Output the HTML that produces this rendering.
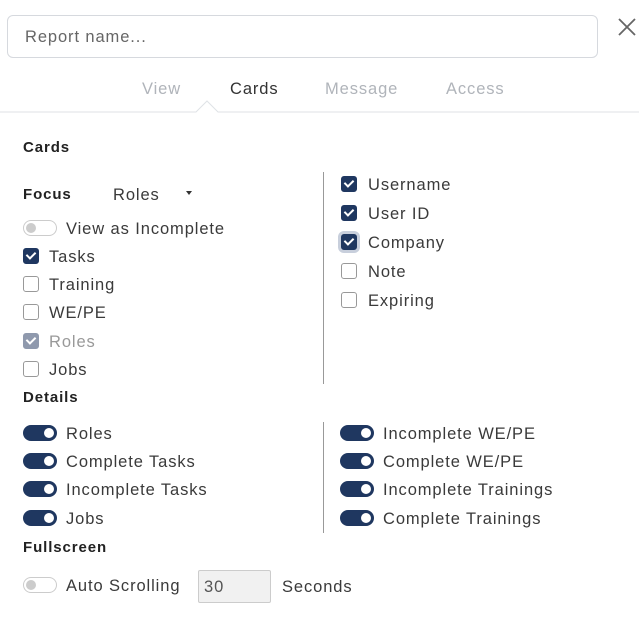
<!DOCTYPE html>
<html><head><style>
body{margin:0;width:639px;height:619px;background:#fff;font-family:"Liberation Sans",sans-serif;color:#333;position:relative;overflow:hidden}
.a{position:absolute;white-space:nowrap}
.t{font-size:16.5px;line-height:20px;color:#3a3a3a;letter-spacing:0.9px;margin-top:1px}
.b{font-weight:bold;font-size:15px;color:#222;letter-spacing:0.9px;margin-top:1px}
.cb{position:absolute;width:14px;height:14px;border:1px solid #999;border-radius:3px;background:#fff}
.cb.on{background:#1f3760;border-color:#1f3760}
.cb.dis{background:#8f99ad;border-color:#8f99ad}
.cb.on::after,.cb.dis::after{content:"";position:absolute;left:4px;top:1px;width:4px;height:7px;border:solid #fff;border-width:0 2px 2px 0;transform:rotate(45deg)}
.tg{position:absolute;width:34px;height:16px;border-radius:8px;background:#1f3760}
.tg::after{content:"";position:absolute;right:3px;top:3px;width:10px;height:10px;border-radius:50%;background:#fff}
.tg.off{background:#fff;border:1px solid #ccc;width:32px;height:14px}
.tg.off::after{left:2px;top:2px;background:#ccc}
</style></head><body>
<div class="a" style="left:7px;top:15px;width:589px;height:41px;border:1px solid #d6d9de;border-radius:6px"></div>
<div class="a t" style="left:25px;top:26px;color:#666">Report name...</div>
<svg class="a" style="left:617px;top:17px" width="20" height="20"><path d="M2 2L18 18M18 2L2 18" stroke="#666" stroke-width="1.8"/></svg>
<div class="a t" style="left:142px;top:78px;color:#b0b4ba">View</div>
<div class="a t" style="left:230px;top:78px;color:#333">Cards</div>
<div class="a t" style="left:325px;top:78px;color:#b0b4ba">Message</div>
<div class="a t" style="left:446px;top:78px;color:#b0b4ba">Access</div>
<svg class="a" style="left:0;top:99px" width="639" height="16"><path d="M0 13H196L207 2L218 13H639" fill="#fff" stroke="#dfe2e6" stroke-width="1"/></svg>
<div class="a b" style="left:23px;top:138px">Cards</div>
<div class="a b" style="left:23px;top:185px">Focus</div>
<div class="a t" style="left:113px;top:184px">Roles</div>
<div class="a" style="left:186px;top:191px;border:3px solid transparent;border-top:4px solid #333"></div>
<div class="tg off" style="left:23px;top:220px"></div><div class="a t" style="left:66px;top:218px">View as Incomplete</div>
<div class="cb on" style="left:23px;top:248px"></div><div class="a t" style="left:49px;top:246px">Tasks</div>
<div class="cb" style="left:23px;top:276px"></div><div class="a t" style="left:49px;top:274px">Training</div>
<div class="cb" style="left:23px;top:304px"></div><div class="a t" style="left:49px;top:302px">WE/PE</div>
<div class="cb dis" style="left:23px;top:333px"></div><div class="a t" style="left:49px;top:331px;color:#999">Roles</div>
<div class="cb" style="left:23px;top:361px"></div><div class="a t" style="left:49px;top:359px">Jobs</div>
<div class="a" style="left:323px;top:172px;width:1px;height:212px;background:#999"></div>
<div class="cb on" style="left:341px;top:176px"></div><div class="a t" style="left:368px;top:174px">Username</div>
<div class="cb on" style="left:341px;top:205px"></div><div class="a t" style="left:368px;top:203px">User ID</div>
<div class="cb on" style="left:341px;top:234px;box-shadow:0 0 0 3px #c8cfdc"></div><div class="a t" style="left:368px;top:232px">Company</div>
<div class="cb" style="left:341px;top:263px"></div><div class="a t" style="left:368px;top:261px">Note</div>
<div class="cb" style="left:341px;top:292px"></div><div class="a t" style="left:368px;top:290px">Expiring</div>
<div class="a b" style="left:23px;top:388px">Details</div>
<div class="tg" style="left:23px;top:425px"></div><div class="a t" style="left:66px;top:423px">Roles</div>
<div class="tg" style="left:23px;top:453px"></div><div class="a t" style="left:66px;top:451px">Complete Tasks</div>
<div class="tg" style="left:23px;top:481px"></div><div class="a t" style="left:66px;top:479px">Incomplete Tasks</div>
<div class="tg" style="left:23px;top:510px"></div><div class="a t" style="left:66px;top:508px">Jobs</div>
<div class="a" style="left:323px;top:422px;width:1px;height:111px;background:#999"></div>
<div class="tg" style="left:340px;top:425px"></div><div class="a t" style="left:383px;top:423px">Incomplete WE/PE</div>
<div class="tg" style="left:340px;top:453px"></div><div class="a t" style="left:383px;top:451px">Complete WE/PE</div>
<div class="tg" style="left:340px;top:481px"></div><div class="a t" style="left:383px;top:479px">Incomplete Trainings</div>
<div class="tg" style="left:340px;top:510px"></div><div class="a t" style="left:383px;top:508px">Complete Trainings</div>
<div class="a b" style="left:23px;top:538px">Fullscreen</div>
<div class="tg off" style="left:23px;top:577px"></div><div class="a t" style="left:66px;top:575px">Auto Scrolling</div>
<div class="a" style="left:198px;top:570px;width:71px;height:31px;border:1px solid #ccc;border-radius:2px;background:#f1f1f1"></div>
<div class="a t" style="left:204px;top:576px;color:#555">30</div>
<div class="a t" style="left:282px;top:576px">Seconds</div>
</body></html>
